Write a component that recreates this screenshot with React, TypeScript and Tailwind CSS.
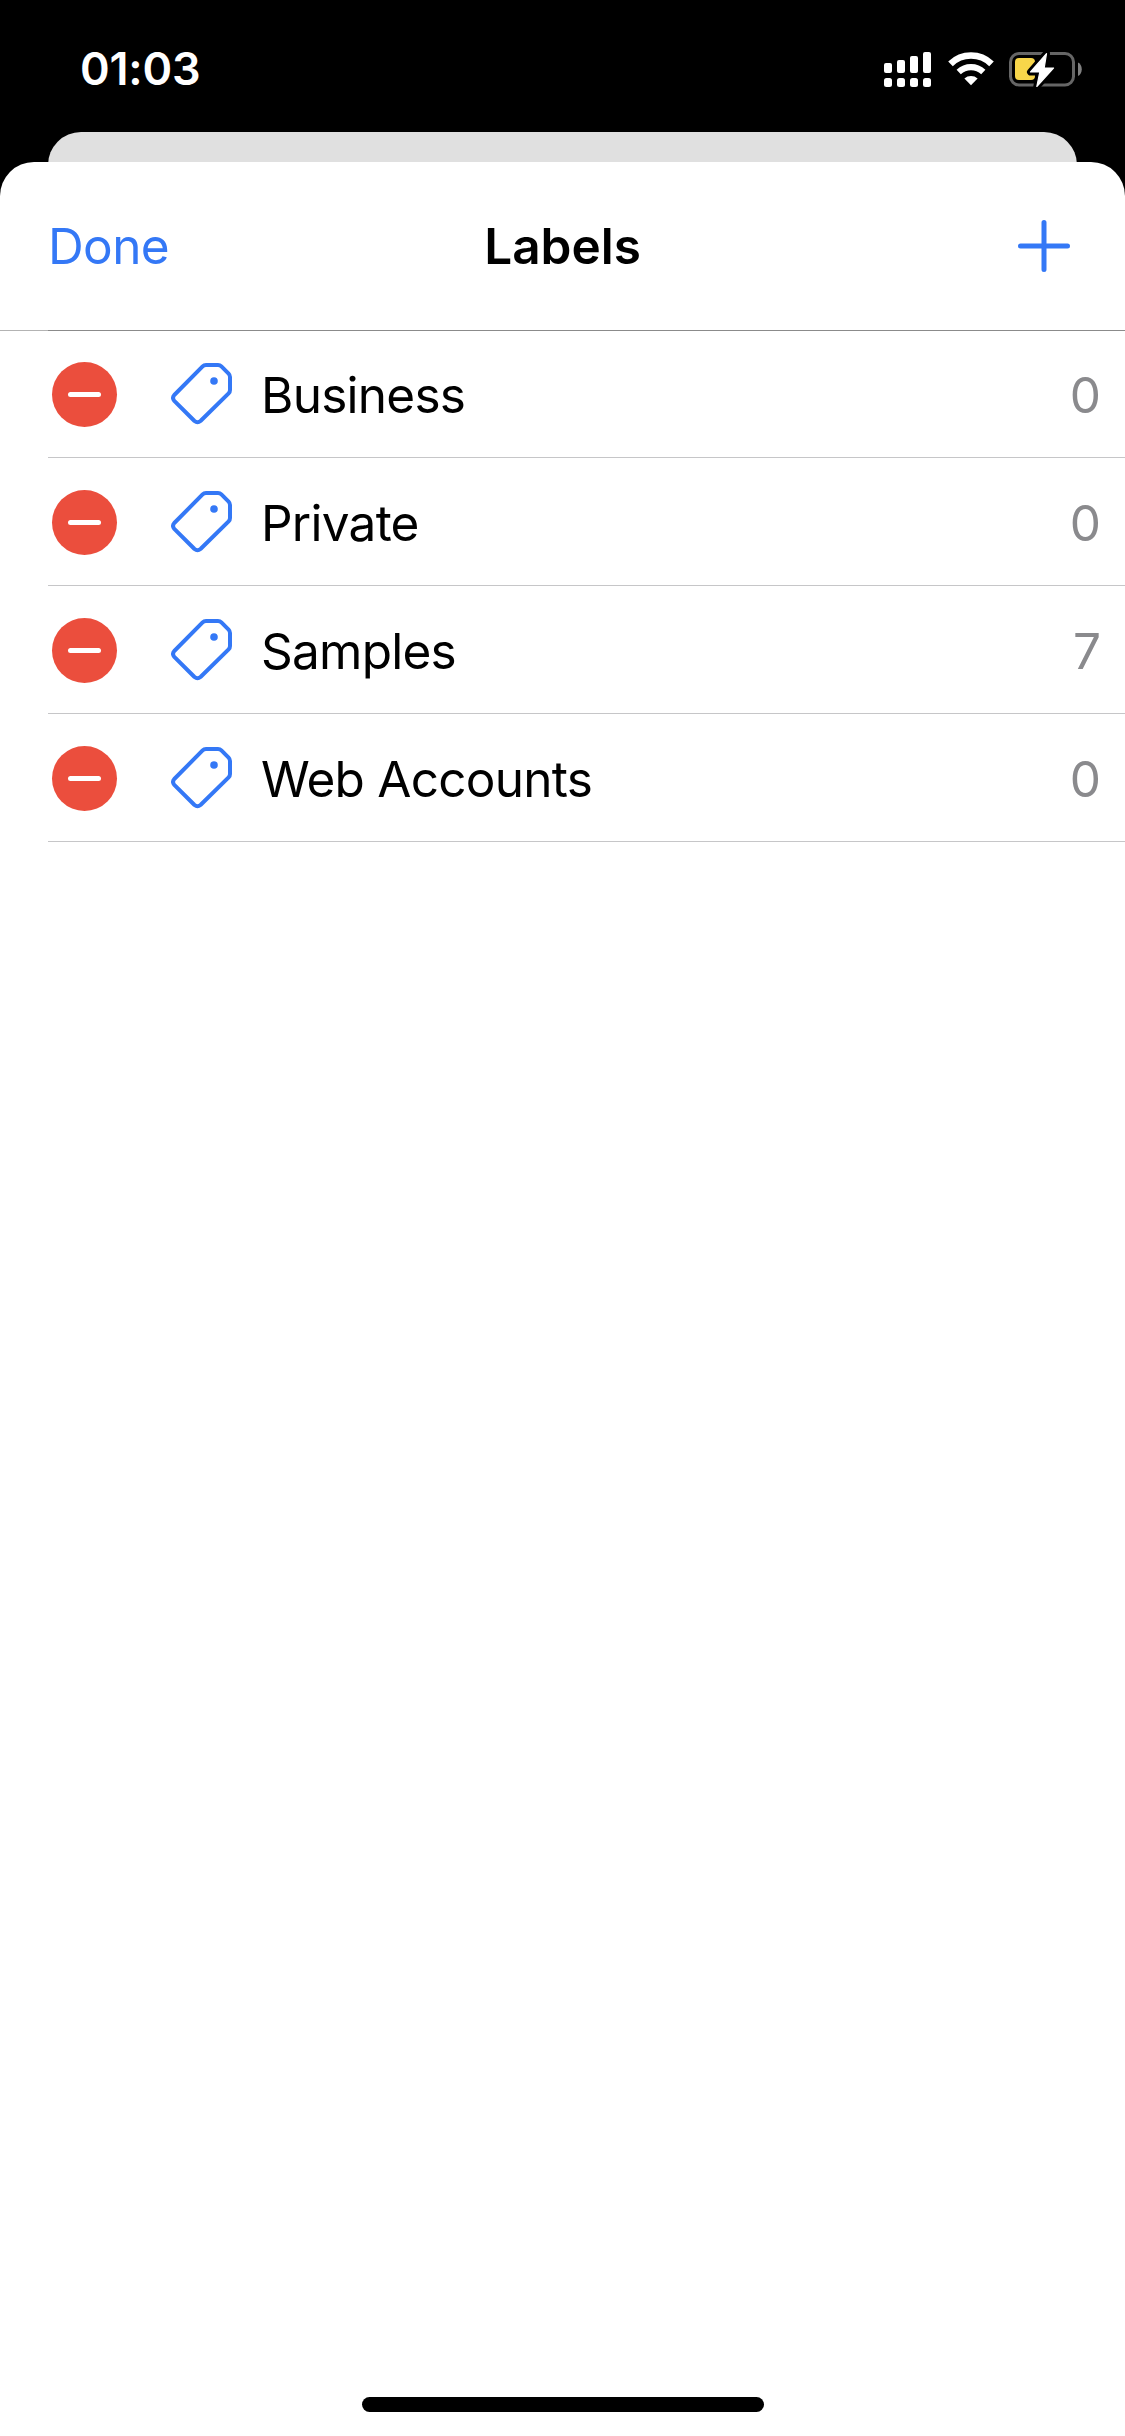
import React from "react";

const labels = [
  { name: "Business", count: 0 },
  { name: "Private", count: 0 },
  { name: "Samples", count: 7 },
  { name: "Web Accounts", count: 0 },
];

const SignalIcon = () => (
  <svg width="47" height="36" viewBox="0 0 47 36" fill="white">
    <rect x="0" y="12" width="8" height="10" rx="2" />
    <rect x="13" y="9" width="8" height="13" rx="2" />
    <rect x="26" y="5" width="8" height="17" rx="2" />
    <rect x="39" y="1" width="8" height="21" rx="2" />
    <rect x="0" y="27" width="8" height="9" rx="2.5" />
    <rect x="13" y="27" width="8" height="9" rx="2.5" />
    <rect x="26" y="27" width="8" height="9" rx="2.5" />
    <rect x="39" y="27" width="8" height="9" rx="2.5" />
  </svg>
);

const WifiIcon = () => (
  <svg width="46" height="36" viewBox="0 0 46 36" fill="none" stroke="white">
    <path d="M2.5 12.8a29.5 29.5 0 0 1 41 0" strokeWidth="6.6" />
    <path d="M10.7 21a18 18 0 0 1 24.6 0" strokeWidth="6.2" />
    <path d="M16.4 27.6a10 10 0 0 1 13.2 0L23 34.2z" fill="white" stroke="none" />
  </svg>
);

const BatteryIcon = () => (
  <svg width="73" height="36" viewBox="0 0 73 36">
    <rect x="1.5" y="2.5" width="63" height="31.5" rx="8.5" fill="none" stroke="#666666" strokeWidth="3" />
    <path d="M69 11.5c5 2 5 11.5 0 13.5z" fill="#808080" />
    <rect x="6" y="7" width="20" height="22" rx="4" fill="#f8d64a" />
    <path
      d="M37.5 2.6 21.5 21h9.3l-3 14.5L44.5 17h-9.3z"
      fill="white"
      stroke="black"
      strokeWidth="7"
      strokeLinejoin="round"
    />
    <path
      d="M37.5 2.6 21.5 21h9.3l-3 14.5L44.5 17h-9.3z"
      fill="white"
      stroke="white"
      strokeWidth="1.2"
      strokeLinejoin="round"
    />
  </svg>
);

const PlusIcon = () => (
  <svg width="54" height="54" viewBox="0 0 54 54" fill="none" stroke="#3478f6" strokeWidth="5" strokeLinecap="round">
    <path d="M27 3.5v47M3.5 27h47" />
  </svg>
);

const TagIcon = () => (
  <svg width="62" height="63" viewBox="0 0 62 63" fill="none" stroke="#3478f6" strokeWidth="4" strokeLinejoin="round">
    <path d="M35 2H47Q49 2 50.4 3.4L57.6 10.6Q59 12 59 14V27Q59 29 57.6 30.4L29.5 58Q26.5 60.5 23.5 58L3.3 37.8Q.8 35 3.3 32L31.6 3.4Q33 2 35 2Z" />
    <circle cx="43" cy="18" r="3.8" fill="#3478f6" stroke="none" />
  </svg>
);

const RemoveIcon = () => (
  <span className="flex size-[65px] items-center justify-center rounded-full bg-[#eb4e3d]">
    <span className="h-[5px] w-[33px] rounded-full bg-white" />
  </span>
);

const App: React.FC = () => {
  return (
    <div className="flex h-[2436px] w-[1125px] flex-col overflow-hidden bg-black font-['Inter',sans-serif]">
      {/* Status bar */}
      <div className="flex h-[132px] shrink-0 items-start justify-between pl-20 pr-[43px]">
        <span className="mt-[42px] text-[45px] font-semibold leading-[54px] tracking-[-0.2px] text-white">01:03</span>
        <div className="mt-[51px] flex">
          <SignalIcon />
          <div className="ml-[17px]"><WifiIcon /></div>
          <div className="ml-[15px]"><BatteryIcon /></div>
        </div>
      </div>

      {/* Card behind the sheet */}
      <div className="mx-12 h-[60px] shrink-0 rounded-t-[33px] bg-[#e0e0e0]" />

      {/* Sheet */}
      <main className="relative -mt-[30px] flex flex-1 flex-col rounded-t-[34px] bg-white">
        <header className="flex h-[168px] shrink-0 items-center pl-12 pr-[54px]">
          <button className="flex-1 text-left text-[49.5px] leading-[60px] tracking-[-0.6px] text-[#3478f6]">Done</button>
          <h1 className="ml-1.5 text-[49.5px] font-semibold leading-[60px] text-black">Labels</h1>
          <button className="flex flex-1 justify-end"><PlusIcon /></button>
        </header>
        <div className="flex h-px shrink-0 bg-[#b3b3b3]">
          <div className="ml-12 flex-1 bg-[#8b8b8b]" />
        </div>

        <ul className="flex flex-col">
          {labels.map((label) => (
            <li
              key={label.name}
              className="ml-12 flex h-32 items-center border-b border-[#c6c6c8] pl-1 pr-6 pt-0.5 first:h-[127px] first:pt-px"
            >
              <RemoveIcon />
              <div className="ml-[54px]"><TagIcon /></div>
              <span className="ml-7 flex-1 text-[49.5px] leading-[60px] tracking-[-0.75px] text-black">{label.name}</span>
              <span className="text-[49.5px] leading-[60px] text-[#8a8a8d]">{label.count}</span>
            </li>
          ))}
        </ul>

        {/* Home indicator */}
        <div className="mx-auto mb-6 mt-auto h-[15px] w-[402px] rounded-full bg-black" />
      </main>
    </div>
  );
};

export default App;
